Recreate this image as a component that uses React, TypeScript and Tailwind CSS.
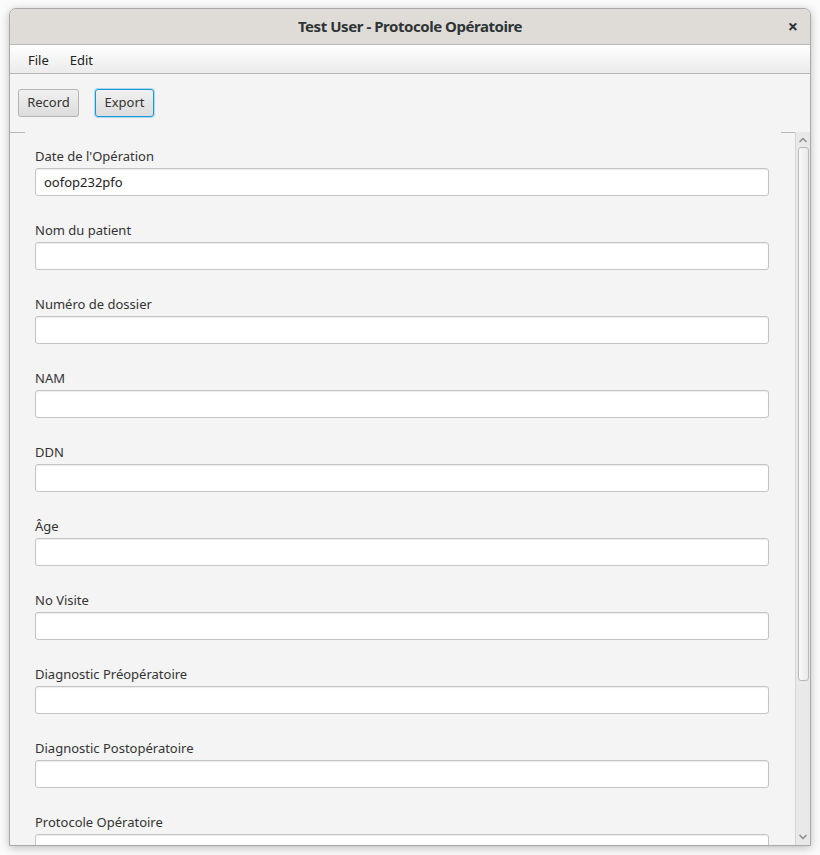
const fields = [
  { label: "Date de l'Opération", value: "oofop232pfo" },
  { label: "Nom du patient", value: "" },
  { label: "Numéro de dossier", value: "" },
  { label: "NAM", value: "" },
  { label: "DDN", value: "" },
  { label: "Âge", value: "" },
  { label: "No Visite", value: "" },
  { label: "Diagnostic Préopératoire", value: "" },
  { label: "Diagnostic Postopératoire", value: "" },
  { label: "Protocole Opératoire", value: "" },
];

const Field: React.FC<{ label: string; value: string }> = ({ label, value }) => {
  return (
    <div className="flex flex-col mb-[25px]">
      <div className="h-[18px] leading-[18px] text-[13px] text-[#333]">{label}</div>
      <div className="mt-[3px] h-[28px] w-[734px] shrink-0 rounded-[3px] border border-[#c4c4c4] bg-white shadow-[inset_0_1px_1px_rgba(0,0,0,0.08)] px-[8px] leading-[26px] text-[13px] text-[#222]">
        {value}
      </div>
    </div>
  );
};

const App: React.FC = () => {
  return (
    <div className="w-[820px] h-[855px] bg-[#fbfbfb] pt-[8px] pl-[9px] overflow-hidden font-['Noto_Sans',sans-serif]">
      <div className="w-[802px] h-[838px] flex flex-col border border-[#a8a8a8] rounded-t-[7px] bg-[#f4f4f4] shadow-[0_2px_10px_rgba(0,0,0,0.25)] overflow-hidden">
        {/* title bar */}
        <div className="h-[36px] shrink-0 relative flex items-center justify-center bg-[#dfdcd8] border-b border-[#bcb9b4]">
          <span className="text-[15px] font-bold text-[#2e3436] tracking-[-0.45px]">Test User - Protocole Opératoire</span>
          <span className="absolute right-[12px] top-[7px] text-[18px] font-bold text-[#2e3436] leading-[20px]">×</span>
        </div>
        {/* menu bar */}
        <div className="h-[29px] shrink-0 flex items-center gap-[21px] pl-[18px] pt-[3px] bg-gradient-to-b from-white to-[#ebebeb] border-b border-[#b6b6b6] text-[13px] text-[#222]">
          <span>File</span>
          <span>Edit</span>
        </div>
        {/* toolbar */}
        <div className="h-[58px] shrink-0 flex items-start gap-[16px] pl-[8px] pt-[15px]">
          <button className="h-[28px] w-[61px] rounded-[3px] border border-[#b4b4b4] bg-gradient-to-b from-[#f1f1f1] to-[#dcdcdc] text-[13px] text-[#333]">
            Record
          </button>
          <button className="h-[28px] w-[59px] rounded-[3px] border border-[#1a9ad6] bg-gradient-to-b from-[#f1f1f1] to-[#dcdcdc] shadow-[0_0_0_1px_rgba(40,160,220,0.35)] text-[13px] text-[#333]">
            Export
          </button>
        </div>
        {/* scroll pane */}
        <div className="flex-1 flex min-h-0 relative">
          <div className="absolute left-0 top-0 w-[15px] h-px bg-[#b8b8b8]" />
          <div className="absolute right-[15px] top-0 w-[14px] h-px bg-[#b8b8b8]" />
          <div className="flex-1 overflow-hidden pl-[25px] pt-[15px]">
            {fields.map((f) => (
              <Field key={f.label} label={f.label} value={f.value} />
            ))}
          </div>
          <div className="w-[15px] shrink-0 flex flex-col items-center bg-[#e9e9e9] border-l border-[#d6d6d6]">
            <svg width="10" height="8" viewBox="0 0 10 8" className="mt-[4px] shrink-0">
              <path d="M1.5 6 L5 2.5 L8.5 6" fill="none" stroke="#8a8a8a" strokeWidth="1.4" />
            </svg>
            <div className="mt-[3px] w-[11px] h-[534px] rounded-[3px] border border-[#b8b8b8] bg-gradient-to-r from-[#fafafa] to-[#e8e8e8]" />
            <div className="flex-1" />
            <svg width="10" height="8" viewBox="0 0 10 8" className="mb-[4px] shrink-0">
              <path d="M1.5 2 L5 5.5 L8.5 2" fill="none" stroke="#8a8a8a" strokeWidth="1.4" />
            </svg>
          </div>
        </div>
      </div>
    </div>
  );
};

export default App;
